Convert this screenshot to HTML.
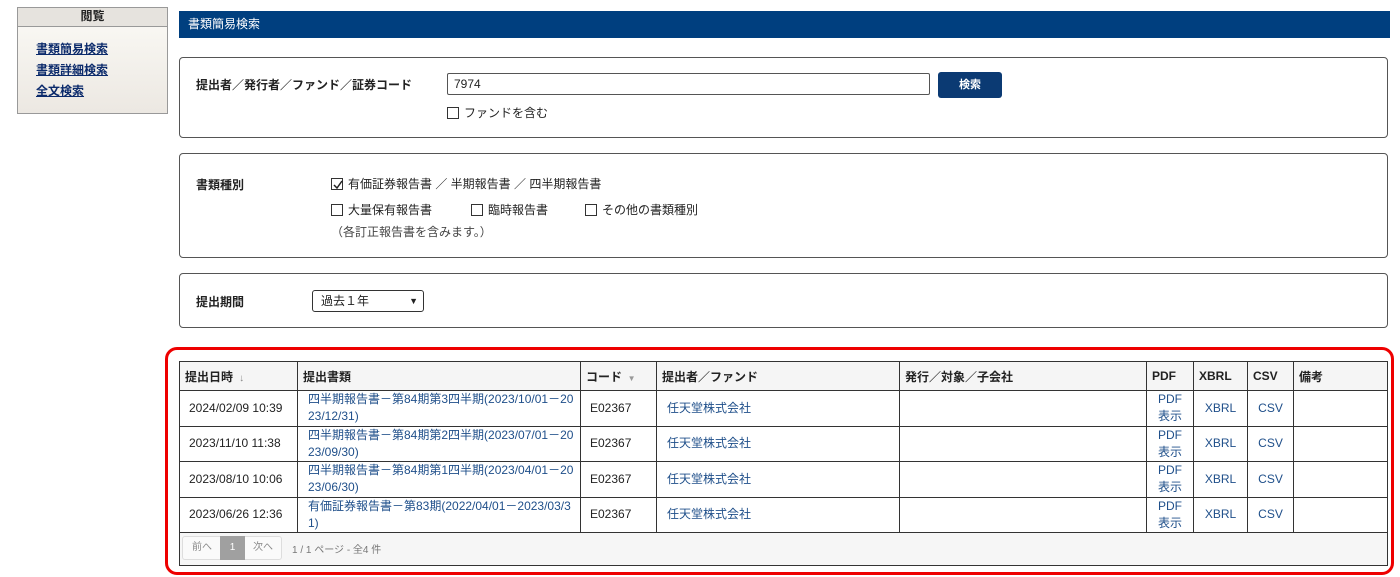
<!DOCTYPE html>
<html><head><meta charset="utf-8"><style>
*{box-sizing:border-box;margin:0;padding:0}
body{width:1400px;height:577px;background:#fff;font-family:"Liberation Sans","Noto Sans CJK JP",sans-serif;font-size:12px;color:#222;position:relative;overflow:hidden}
.a{position:absolute}
.side{left:17px;top:7px;width:151px;height:107px;border:1px solid #999;background:linear-gradient(#fbfaf6,#ece8e2)}
.side .h{height:19px;border-bottom:1px solid #999;background:#e6e3de;text-align:center;font-weight:bold;font-size:12px;line-height:17px}
.side a{position:absolute;left:18px;color:#0b2a6b;text-decoration:underline;font-weight:bold;font-size:12px}
.bar{left:179px;top:11px;width:1211px;height:27px;background:#003f7f;color:#fff;font-size:12px;line-height:26px;padding-left:9px}
.box{left:179px;width:1209px;border:1px solid #555;border-radius:4px}
.cb{display:inline-block;width:12px;height:12px;border:1px solid #333;vertical-align:-2px;margin-right:5px;background:#fff;position:relative}
.lbl{font-weight:bold;font-size:12px}
table{border-collapse:collapse;position:absolute;left:179px;top:361px;width:1209px;table-layout:fixed}
td,th{border:1px solid #333;font-size:12px;padding:0 5px;vertical-align:middle}
th{background:#f5f5f5;height:29px;text-align:left;font-weight:bold}
td{height:35.5px;line-height:17px;background:#fff;word-break:break-all}
.l{color:#1f4f8a}
.c{text-align:center}
</style></head><body>
<div class="a side"><div class="h">閲覧</div>
<a style="top:32px">書類簡易検索</a><a style="top:53px">書類詳細検索</a><a style="top:74px">全文検索</a></div>
<div class="a bar">書類簡易検索</div>

<div class="a box" style="top:57px;height:81px"></div>
<div class="a lbl" style="left:196px;top:76px">提出者／発行者／ファンド／証券コード</div>
<div class="a" style="left:447px;top:73px;width:483px;height:22px;border:1px solid #555;border-radius:2px;padding-left:6px;line-height:20px">7974</div>
<div class="a" style="left:938px;top:72px;width:64px;height:26px;background:#0b3a73;border-radius:3px;color:#fff;font-weight:bold;font-size:11px;text-align:center;line-height:26px">検索</div>
<div class="a" style="left:447px;top:104px"><span class="cb"></span>ファンドを含む</div>

<div class="a box" style="top:153px;height:105px"></div>
<div class="a lbl" style="left:196px;top:176px">書類種別</div>
<div class="a" style="left:331px;top:175px"><span class="cb"><svg width="12" height="12" style="position:absolute;left:0;top:0"><path d="M2 6 L5 9 L10 2" stroke="#222" stroke-width="1.5" fill="none"/></svg></span>有価証券報告書 ／ 半期報告書 ／ 四半期報告書</div>
<div class="a" style="left:331px;top:201px"><span class="cb"></span>大量保有報告書</div>
<div class="a" style="left:471px;top:201px"><span class="cb"></span>臨時報告書</div>
<div class="a" style="left:585px;top:201px"><span class="cb"></span>その他の書類種別</div>
<div class="a" style="left:331px;top:223px;color:#444">（各訂正報告書を含みます。）</div>

<div class="a box" style="top:273px;height:55px"></div>
<div class="a lbl" style="left:196px;top:293px">提出期間</div>
<div class="a" style="left:312px;top:290px;width:112px;height:22px;border:1px solid #333;border-radius:3px;padding-left:8px;line-height:20px">過去１年<span style="position:absolute;right:5px;top:0;font-size:9px">&#9660;</span></div>

<div class="a" style="left:179px;top:361px;width:1209px;height:205px;border:1px solid #333;background:#f6f6f6"></div>
<table>
<colgroup><col style="width:118px"><col style="width:283px"><col style="width:76px"><col style="width:243px"><col style="width:247px"><col style="width:47px"><col style="width:54px"><col style="width:46px"><col></colgroup>
<tr><th>提出日時 <span style="color:#888;font-size:10px">&nbsp;↓</span></th><th>提出書類</th><th>コード <span style="color:#999;font-size:8px">&nbsp;▼</span></th><th>提出者／ファンド</th><th>発行／対象／子会社</th><th>PDF</th><th>XBRL</th><th>CSV</th><th>備考</th></tr>
<tr><td style="padding-left:9px">2024/02/09 10:39</td><td class="l" style="padding-left:10px">四半期報告書－第84期第3四半期(2023/10/01－2023/12/31)</td><td style="padding-left:9px">E02367</td><td class="l" style="padding-left:10px">任天堂株式会社</td><td></td><td class="l c">PDF<br>表示</td><td class="l c">XBRL</td><td class="l c">CSV</td><td></td></tr>
<tr><td style="padding-left:9px">2023/11/10 11:38</td><td class="l" style="padding-left:10px">四半期報告書－第84期第2四半期(2023/07/01－2023/09/30)</td><td style="padding-left:9px">E02367</td><td class="l" style="padding-left:10px">任天堂株式会社</td><td></td><td class="l c">PDF<br>表示</td><td class="l c">XBRL</td><td class="l c">CSV</td><td></td></tr>
<tr><td style="padding-left:9px">2023/08/10 10:06</td><td class="l" style="padding-left:10px">四半期報告書－第84期第1四半期(2023/04/01－2023/06/30)</td><td style="padding-left:9px">E02367</td><td class="l" style="padding-left:10px">任天堂株式会社</td><td></td><td class="l c">PDF<br>表示</td><td class="l c">XBRL</td><td class="l c">CSV</td><td></td></tr>
<tr><td style="padding-left:9px">2023/06/26 12:36</td><td class="l" style="padding-left:10px">有価証券報告書－第83期(2022/04/01－2023/03/31)</td><td style="padding-left:9px">E02367</td><td class="l" style="padding-left:10px">任天堂株式会社</td><td></td><td class="l c">PDF<br>表示</td><td class="l c">XBRL</td><td class="l c">CSV</td><td></td></tr>
</table>
<div class="a" style="left:182px;top:536px;width:100px;height:24px;border:1px solid #ddd;border-radius:3px;background:#fafafa;font-size:10px;color:#888;line-height:22px">
<span style="position:absolute;left:9px">前へ</span>
<span style="position:absolute;left:37px;top:-1px;width:25px;height:24px;background:#a0a0a0;color:#fff;text-align:center;line-height:24px">1</span>
<span style="position:absolute;left:70px">次へ</span></div>
<div class="a" style="left:292px;top:541px;font-size:10px;color:#777">1 / 1 ページ - 全4 件</div>

<div class="a" style="left:165px;top:347px;width:1229px;height:228px;border:3px solid #e00;border-radius:12px"></div>
</body></html>
